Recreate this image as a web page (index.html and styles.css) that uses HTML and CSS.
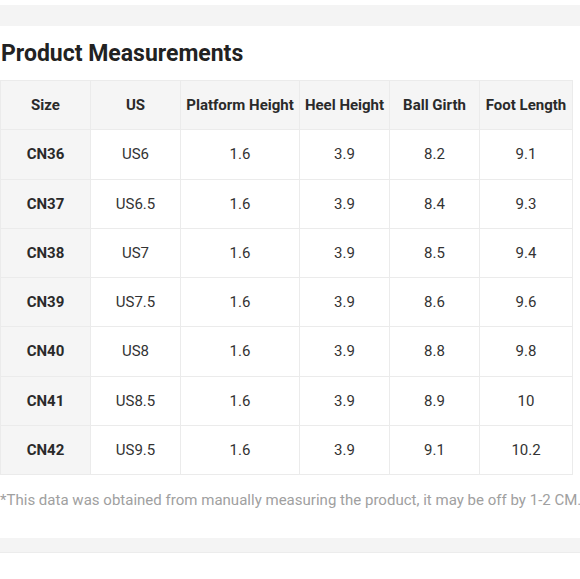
FILE: index.html
```html
<!DOCTYPE html>
<html lang="en">
<head>
<meta charset="utf-8">
<title>Product Measurements</title>
<link rel="stylesheet" href="styles.css">
</head>
<body>
<div class="page">
  <div class="band band-top"></div>
  <h2 class="title">Product Measurements</h2>
  <table class="sizes">
    <colgroup>
      <col class="c-size"><col class="c-us"><col class="c-plat"><col class="c-heel"><col class="c-ball"><col class="c-foot">
    </colgroup>
    <thead>
      <tr><th>Size</th><th>US</th><th>Platform Height</th><th>Heel Height</th><th>Ball Girth</th><th>Foot Length</th></tr>
    </thead>
    <tbody>
      <tr><th>CN36</th><td>US6</td><td>1.6</td><td>3.9</td><td>8.2</td><td>9.1</td></tr>
      <tr><th>CN37</th><td>US6.5</td><td>1.6</td><td>3.9</td><td>8.4</td><td>9.3</td></tr>
      <tr><th>CN38</th><td>US7</td><td>1.6</td><td>3.9</td><td>8.5</td><td>9.4</td></tr>
      <tr><th>CN39</th><td>US7.5</td><td>1.6</td><td>3.9</td><td>8.6</td><td>9.6</td></tr>
      <tr><th>CN40</th><td>US8</td><td>1.6</td><td>3.9</td><td>8.8</td><td>9.8</td></tr>
      <tr><th>CN41</th><td>US8.5</td><td>1.6</td><td>3.9</td><td>8.9</td><td>10</td></tr>
      <tr><th>CN42</th><td>US9.5</td><td>1.6</td><td>3.9</td><td>9.1</td><td>10.2</td></tr>
    </tbody>
  </table>
  <p class="note">*This data was obtained from manually measuring the product, it may be off by 1-2 CM.</p>
  <div class="band band-bottom"></div>
</div>
</body>
</html>
```
FILE: styles.css
```css
html, body {
  margin: 0;
  padding: 0;
  background: #ffffff;
}
.page {
  width: 580px;
  overflow: hidden;
  font-family: Roboto, "Noto Sans", Arial, sans-serif;
  color: #333333;
}
.band {
  background: #f4f4f4;
}
.band-top {
  margin-top: 5px;
  height: 21px;
}
.title {
  margin: 0;
  padding: 13px 0 0 1px;
  height: 42px;
  box-sizing: border-box;
  font-size: 23px;
  line-height: 30px;
  font-weight: 700;
  color: #222222;
}
.sizes {
  border-collapse: collapse;
  table-layout: fixed;
  width: 572px;
  margin-top: 12px;
}
.c-size { width: 90px; }
.c-us { width: 90px; }
.c-plat { width: 119px; }
.c-heel { width: 90px; }
.c-ball { width: 90px; }
.c-foot { width: 93px; }
.sizes th, .sizes td {
  border: 1px solid #ebebeb;
  height: 48.25px;
  padding: 0;
  text-align: center;
  font-size: 15px;
  white-space: nowrap;
  color: #333333;
}
.sizes th {
  font-weight: 700;
  background: #f5f5f5;
  color: #2a2a2a;
}
.sizes td {
  font-weight: 400;
  background: #ffffff;
}
.note {
  margin: 0;
  padding-top: 14px;
  height: 63px;
  box-sizing: border-box;
  font-size: 15px;
  letter-spacing: 0.015px;
  line-height: 22px;
  color: #a0a0a0;
  white-space: nowrap;
}
.band-bottom {
  height: 14px;
  border-bottom: 1px solid #ececec;
}
```
